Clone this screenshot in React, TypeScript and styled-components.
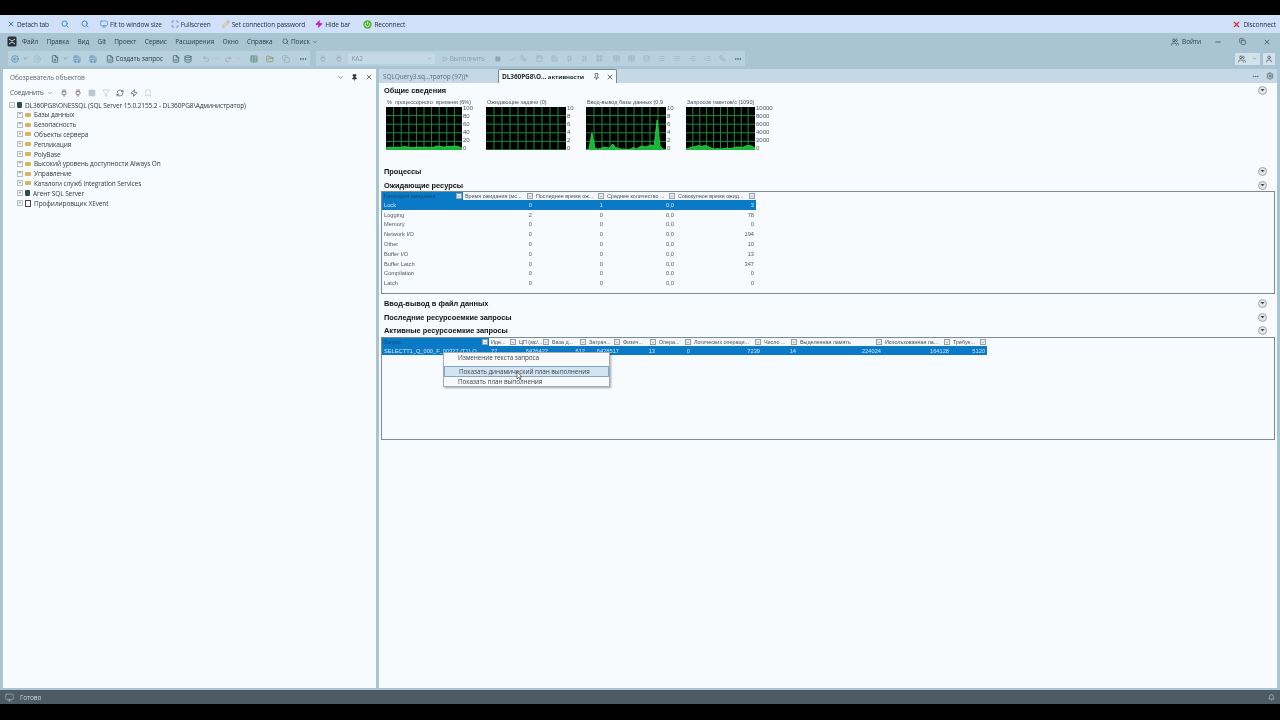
import React from "react";
import styled, { createGlobalStyle } from "styled-components";
import {
  Bell,
  Binary,
  Bookmark,
  Calendar,
  Check,
  ChevronDown,
  CircleArrowLeft,
  CircleArrowRight,
  Copy,
  Database,
  Ellipsis,
  FileCode,
  FilePlus,
  Filter,
  FolderOpen,
  IndentDecrease,
  IndentIncrease,
  LayoutGrid,
  List,
  Maximize,
  Minus,
  Monitor,
  Pencil,
  Pin,
  Play,
  Plug,
  Redo2,
  RefreshCw,
  Save,
  Search,
  Settings,
  Square,
  Table,
  Undo2,
  User,
  Users,
  Workflow,
  X,
  Zap,
} from "lucide-react";

const GlobalStyle = createGlobalStyle`
  html, body, #root { margin: 0; height: 100%; background: #000; }
  body { font-family: "Open Sans", "Noto Sans", sans-serif; overflow: hidden; }
`;

const CPU = [2, 3, 2.5, 3, 2.5, 3.5, 3, 2.5, 2.5, 3, 2.5, 3, 2.5, 2.5, 4, 3.5, 3, 3.5, 3.5, 4, 3.5, 2];
const TASKS = [0, 0];
const IO = [0, 1, 17, 2, 1, 1.5, 3, 2.5, 2, 6, 2.5, 1.5, 1, 1, 0.5, 1, 2.5, 1, 3, 4, 3, 4, 5, 4, 30, 4, 1, 0.5];
const PACKETS = [1, 2, 3, 3.5, 4.5, 3.5, 4.5, 3.5, 2, 1, 1.5, 1, 1.5, 2, 1.5, 2, 3, 3, 2.5, 4, 4.5, 4, 2];

const CHARTS = [
  { title: "%\u00a0 процессорного\u00a0 времени (6%)", chartWidth: 76, axis: [100, 80, 60, 40, 20, 0], points: CPU },
  { title: "Ожидающие задачи (0)", chartWidth: 80, axis: [10, 8, 6, 4, 2, 0], points: TASKS },
  { title: "Ввод-вывод базы данных (0,9", chartWidth: 80, axis: [10, 8, 6, 4, 2, 0], points: IO },
  { title: "Запросов пакетов/с (1090)", chartWidth: 69, axis: [10000, 8000, 6000, 4000, 2000, 0], points: PACKETS },
];

const WAIT_COLUMNS = [
  { title: "Категория ожидания", width: 81 },
  { title: "Время ожидания (мс...", width: 71 },
  { title: "Последнее время ож...", width: 71 },
  { title: "Среднее количество ...", width: 71 },
  { title: "Совокупное время ожид...", width: 80 },
];

const WAIT_ROWS = [
  ["Lock", "0", "1", "0,0", "3"],
  ["Logging", "2", "0", "0,0", "78"],
  ["Memory", "0", "0", "0,0", "0"],
  ["Network I/O", "0", "0", "0,0", "194"],
  ["Other", "0", "0", "0,0", "10"],
  ["Buffer I/O", "0", "0", "0,0", "13"],
  ["Buffer Latch", "0", "0", "0,0", "347"],
  ["Compilation", "0", "0", "0,0", "0"],
  ["Latch", "0", "0", "0,0", "0"],
];

const ACTIVE_COLUMNS = [
  { title: "Запрос", width: 107 },
  { title: "Иде...", width: 28 },
  { title: "ЦП (мс/...", width: 33 },
  { title: "База д...", width: 37 },
  { title: "Затрач...", width: 34 },
  { title: "Физич...", width: 36 },
  { title: "Опера...", width: 35 },
  { title: "Логических операци...", width: 70 },
  { title: "Число ...", width: 36 },
  { title: "Выделенная память", width: 85 },
  { title: "Использованная па...", width: 68 },
  { title: "Требуе...", width: 36 },
];

const ACTIVE_ROW = [
  "SELECTT1_Q_000_F_00327 (T1) O",
  "77",
  "6426422",
  "612",
  "6428517",
  "13",
  "0",
  "7239",
  "14",
  "224024",
  "164128",
  "5120",
];

const TREE = [
  "Базы данных",
  "Безопасность",
  "Объекты сервера",
  "Репликация",
  "PolyBase",
  "Высокий уровень доступности Always On",
  "Управление",
  "Каталоги служб Integration Services",
  "Агент SQL Server",
  "Профилировщик XEvent",
];

const MENU = ["Файл", "Правка", "Вид", "Git", "Проект", "Сервис", "Расширения", "Окно", "Справка"];

const QUERY_ICONS = [
  { Icon: Workflow, extra: 1 },
  { Icon: Calendar, extra: 0 },
  { Icon: Save, extra: 0 },
  { Icon: Binary, extra: 0 },
  { Icon: Binary, extra: 0 },
  { Icon: LayoutGrid, extra: 2 },
  { Icon: Table, extra: 0 },
  { Icon: Table, extra: 0 },
  { Icon: Database, extra: 0 },
  { Icon: List, extra: 0 },
  { Icon: List, extra: 1 },
  { Icon: IndentDecrease, extra: 0 },
  { Icon: IndentIncrease, extra: 0 },
  { Icon: Workflow, extra: 0 },
];

const TrendChart = ({ points, width }: { points: number[]; width: number }) => {
  const step = 100 / (points.length - 1);
  const line = points.map((p, i) => `${(i * step).toFixed(1)},${43 - p}`).join(" ");
  return (
    <ChartSvg $width={width} viewBox="0 0 100 43" preserveAspectRatio="none">
      <rect width="100" height="43" fill="#000" />
      {[8.6, 17.2, 25.8, 34.4].map((y) => (
        <line key={y} x1="0" x2="100" y1={y} y2={y} stroke="#1c8a38" strokeWidth="1" vectorEffect="non-scaling-stroke" />
      ))}
      {[10, 20, 30, 40, 50, 60, 70, 80, 90].map((x) => (
        <line key={x} x1={x} x2={x} y1="0" y2="43" stroke="#1c8a38" strokeWidth="1" vectorEffect="non-scaling-stroke" />
      ))}
      <polygon points={`0,43 ${line} 100,43`} fill="#18b536" />
      <polyline points={line} fill="none" stroke="#2be04f" strokeWidth="0.8" vectorEffect="non-scaling-stroke" />
    </ChartSvg>
  );
};

const CollapseButton = () => (
  <Collapse>
    <svg width="5" height="4" viewBox="0 0 5 4">
      <path d="M0.5 1h4L2.5 3.2z" fill="#444" />
    </svg>
  </Collapse>
);

const ReconnectIcon = () => (
  <svg width="9" height="9" viewBox="0 0 9 9">
    <circle cx="4.5" cy="4.5" r="4.2" fill="#4fb52f" />
    <path d="M3 2.9a2.2 2.2 0 1 0 3 0M4.5 1.8v2.4" fill="none" stroke="#eaf7e0" strokeWidth="0.9" />
  </svg>
);

const GridHeader = ({ columns }: { columns: { title: string; width: number }[] }) => (
  <HeaderRow>
    {columns.map((c, i) => (
      <HeaderCell key={c.title} $width={c.width} $selected={i === 0}>
        <HeaderText $selected={i === 0}>{c.title}</HeaderText>
        <FilterBox>
          <ChevronDown size={5} strokeWidth={2} />
        </FilterBox>
      </HeaderCell>
    ))}
  </HeaderRow>
);

const App = () => (
  <Page>
    <GlobalStyle />
    <RemoteBar>
      <RemoteItem $gap={12}><X size={8} color="#2f7fc4" strokeWidth={3} />Detach tab</RemoteItem>
      <RemoteItem $gap={12}><Search size={8} color="#3d8fc8" strokeWidth={3} /></RemoteItem>
      <RemoteItem $gap={11}><Search size={8} color="#3d8fc8" strokeWidth={3} /></RemoteItem>
      <RemoteItem $gap={9}><Monitor size={8} color="#4a86c0" />Fit to window size</RemoteItem>
      <RemoteItem $gap={11}><Maximize size={8} color="#5566c8" />Fullscreen</RemoteItem>
      <RemoteItem $gap={10}><Pencil size={8} color="#e09a30" />Set connection password</RemoteItem>
      <RemoteItem $gap={13}><Zap size={8} color="#c020c0" fill="#c020c0" />Hide bar</RemoteItem>
      <RemoteItem $gap={0}><ReconnectIcon />Reconnect</RemoteItem>
      <RemoteSpacer />
      <RemoteItem $gap={0}><X size={9} color="#d03030" strokeWidth={3} />Disconnect</RemoteItem>
    </RemoteBar>

    <Shell>
      <TitleBar>
        <Logo>
          <svg width="10" height="11" viewBox="0 0 10 11">
            <rect x="0.5" y="0.5" width="9" height="10" rx="1.5" fill="#26323a" />
            <path d="M2 3l3 2 3-2M2 8l3-2 3 2" fill="none" stroke="#c7dbe6" strokeWidth="1" />
          </svg>
        </Logo>
        {MENU.map((m) => (
          <MenuItem key={m}>{m}</MenuItem>
        ))}
        <SearchItem><Search size={7} /> Поиск <ChevronDown size={6} /></SearchItem>
        <TitleSpacer />
        <LoginItem><Users size={8} /> Войти</LoginItem>
        <WindowButtons>
          <Minus size={8} />
          <Copy size={7} />
          <X size={8} />
        </WindowButtons>
      </TitleBar>

      <ToolRow>
        <ToolGroup $width={302} $gap={4.3}>
          <CircleArrowLeft size={8} color="#3f7fb0" />
          <ChevronDown size={5} />
          <CircleArrowRight size={8} color="#98b4c2" />
          <ToolGap $w={2} />
          <FilePlus size={8} color="#34505e" />
          <ChevronDown size={5} />
          <Save size={8} color="#3f7fb0" />
          <ToolGap $w={0} />
          <Save size={8} color="#3f7fb0" />
          <ToolLabel><FileCode size={8} color="#34505e" />Создать запрос</ToolLabel>
          <FileCode size={8} color="#34505e" />
          <Database size={8} color="#34505e" />
          <ToolGap $w={1} />
          <Undo2 size={8} color="#8fa8b6" />
          <ChevronDown size={5} color="#8fa8b6" />
          <Redo2 size={8} color="#8fa8b6" />
          <ChevronDown size={5} color="#8fa8b6" />
          <ToolGap $w={1} />
          <Table size={8} color="#4d7f64" />
          <IconGap />
          <FolderOpen size={8} color="#8a8a40" />
          <IconGap />
          <Copy size={8} color="#8fa8b6" />
          <ToolGap $w={1} />
          <Ellipsis size={8} color="#34505e" />
        </ToolGroup>
        <ToolGroup $width={429} $gap={4}>
          <Plug size={8} color="#8fa8b6" />
          <ToolGap $w={0} />
          <Plug size={8} color="#8fa8b6" />
          <DbSelect>KA2<ChevronDown size={5} /></DbSelect>
          <RunLabel><Play size={6} />Выполнить</RunLabel>
          <Square size={6} fill="#8fa8b6" color="#8fa8b6" />
          <ToolGap $w={0} />
          <Check size={8} color="#8fa8b6" />
          {QUERY_ICONS.map(({ Icon, extra }, i) => (
            <DimIcon key={i} $extra={extra}><Icon size={7} color="#96b0be" /></DimIcon>
          ))}
          <Ellipsis size={8} color="#34505e" />
        </ToolGroup>
        <TitleSpacer />
        <AccountGroup>
          <AccountBox $width={14}><Users size={8} /></AccountBox>
          <AccountBox $width={11}><ChevronDown size={5} /></AccountBox>
          <AccountSecond $width={12}><User size={8} /></AccountSecond>
        </AccountGroup>
      </ToolRow>

      <Workspace>
        <ExplorerPanel>
          <PanelHead>
            <span>Обозреватель объектов</span>
            <PanelIcons>
              <ChevronDown size={7} />
              <Pin size={7} fill="#333" />
              <X size={8} />
            </PanelIcons>
          </PanelHead>
          <ExplorerTools>
            <ConnectLabel>Соединить <ChevronDown size={6} /></ConnectLabel>
            <Plug size={8} color="#34505e" />
            <Plug size={8} color="#6a3f5a" />
            <Square size={8} color="#b9c8d0" fill="#b9c8d0" />
            <Filter size={8} color="#b9c8d0" />
            <RefreshCw size={8} color="#34505e" />
            <Zap size={8} color="#34505e" />
            <Bookmark size={8} color="#b9c8d0" />
          </ExplorerTools>
          <TreeRoot>
            <Expander>−</Expander>
            <ServerIcon />
            DL360PG8\ONESSQL (SQL Server 15.0.2155.2 - DL360PG8\Администратор)
          </TreeRoot>
          {TREE.map((t, i) => (
            <TreeRow key={t}>
              <Expander>+</Expander>
              {i < 8 ? <FolderIcon /> : i === 8 ? <ServerIcon /> : <XEventIcon />}
              {t}
            </TreeRow>
          ))}
        </ExplorerPanel>

        <DocumentArea>
          <TabStrip>
            <InactiveTab>SQLQuery3.sq...тратор (97))*</InactiveTab>
            <ActiveTab>
              <span>DL360PG8\О... <small>активности</small></span>
              <TabIcons>
                <Pin size={7} />
                <X size={8} />
              </TabIcons>
            </ActiveTab>
            <TabTools>
              <Ellipsis size={7} />
              <Settings size={8} />
            </TabTools>
          </TabStrip>

          <DocBody>
            <SectionHead><SectionTitle>Общие сведения</SectionTitle><CollapseButton /></SectionHead>
            <ChartRow>
              {CHARTS.map((c) => (
                <ChartCard key={c.title}>
                  <ChartTitle>{c.title}</ChartTitle>
                  <ChartBody>
                    <TrendChart points={c.points} width={c.chartWidth} />
                    <Axis>
                      {c.axis.map((a) => (
                        <span key={a}>{a}</span>
                      ))}
                    </Axis>
                  </ChartBody>
                </ChartCard>
              ))}
            </ChartRow>

            <SectionHead><SectionTitle>Процессы</SectionTitle><CollapseButton /></SectionHead>
            <SectionHead><SectionTitle>Ожидающие ресурсы</SectionTitle><CollapseButton /></SectionHead>
            <GridBox $top={-1}>
              <GridHeader columns={WAIT_COLUMNS} />
              {WAIT_ROWS.map((r, ri) => (
                <DataRow key={r[0]} $selected={ri === 0} $height={9.8}>
                  {r.map((v, i) => (
                    <DataCell key={i} $width={WAIT_COLUMNS[i].width} $left={i === 0}>{v}</DataCell>
                  ))}
                </DataRow>
              ))}
            </GridBox>

            <SectionHead $top={2}><SectionTitle>Ввод-вывод в файл данных</SectionTitle><CollapseButton /></SectionHead>
            <SectionHead><SectionTitle>Последние ресурсоемкие запросы</SectionTitle><CollapseButton /></SectionHead>
            <SectionHead $top={-1}><SectionTitle>Активные ресурсоемкие запросы</SectionTitle><CollapseButton /></SectionHead>
            <GridBox $top={0}>
              <GridHeader columns={ACTIVE_COLUMNS} />
              <DataRow $selected $height={9}>
                {ACTIVE_ROW.map((v, i) => (
                  <DataCell key={i} $width={ACTIVE_COLUMNS[i].width} $left={i < 2}>{v}</DataCell>
                ))}
              </DataRow>
              <ContextMenu>
                <ContextItem>Изменение текста запроса</ContextItem>
                <ActiveContextItem>Показать динамический план выполнения</ActiveContextItem>
                <ContextItem>Показать план выполнения</ContextItem>
                <Cursor viewBox="0 0 8 12" width="7" height="10">
                  <path d="M1 1v8.5l2-2 1.4 3 1.3-.6-1.4-2.9H7z" fill="#fff" stroke="#222" strokeWidth="0.7" />
                </Cursor>
              </ContextMenu>
            </GridBox>
          </DocBody>
        </DocumentArea>
      </Workspace>
    </Shell>

    <StatusBar>
      <StatusLeft><Monitor size={9} strokeWidth={1.2} /> Готово</StatusLeft>
      <Bell size={7} />
    </StatusBar>
  </Page>
);

const Page = styled.div`
  display: flex;
  flex-direction: column;
  width: 1280px;
  height: 720px;
  padding: 15px 0 16px;
  box-sizing: border-box;
  background: #000;
  color: #222;
  letter-spacing: -0.1px;
  filter: blur(0.3px);
`;

const RemoteBar = styled.div`
  display: flex;
  align-items: center;
  height: 18px;
  flex: none;
  padding: 0 4px 0 7px;
  background: #cfe0f8;
  font-size: 6.5px;
  color: #1c2a38;
`;

const RemoteItem = styled.div<{ $gap: number }>`
  display: flex;
  align-items: center;
  gap: 2px;
  margin-right: ${(p) => p.$gap}px;
  white-space: nowrap;
`;

const RemoteSpacer = styled.div`
  flex: 1;
`;

const Shell = styled.div`
  display: flex;
  flex-direction: column;
  flex: 1;
  min-height: 0;
  background: #a9c5d3;
`;

const TitleBar = styled.div`
  display: flex;
  align-items: center;
  height: 17px;
  flex: none;
  padding: 0 9px 0 7px;
  font-size: 6.5px;
  color: #2c3d47;
`;

const Logo = styled.div`
  display: flex;
  margin-right: 5px;
`;

const MenuItem = styled.div`
  display: flex;
  align-items: center;
  gap: 2px;
  margin-right: 8.35px;
  white-space: nowrap;
`;

const SearchItem = styled(MenuItem)`
  margin-left: 1px;
`;

const TitleSpacer = styled.div`
  flex: 1;
`;

const LoginItem = styled.div`
  display: flex;
  align-items: center;
  gap: 3px;
  margin-right: 13px;
`;

const WindowButtons = styled.div`
  display: flex;
  align-items: center;
  gap: 17px;
`;

const ToolRow = styled.div`
  display: flex;
  align-items: center;
  gap: 6px;
  height: 17px;
  flex: none;
  padding: 0 5px 0 8px;
`;

const ToolGroup = styled.div<{ $width: number; $gap: number }>`
  display: flex;
  align-items: center;
  gap: ${(p) => p.$gap}px;
  width: ${(p) => p.$width}px;
  height: 15px;
  padding: 0 3px;
  box-sizing: border-box;
  background: #b9d1de;
  font-size: 6.5px;
  color: #2c3d47;
`;

const ToolGap = styled.span<{ $w: number }>`
  width: ${(p) => p.$w}px;
  flex: none;
`;

const IconGap = styled.span`
  width: 0;
  margin-left: -1px;
`;

const ToolLabel = styled.span`
  display: flex;
  align-items: center;
  gap: 1px;
  margin: 0 5px 0 5px;
  white-space: nowrap;
`;

const DbSelect = styled.div`
  display: flex;
  align-items: center;
  justify-content: space-between;
  width: 89px;
  height: 11px;
  margin-left: 2px;
  padding: 0 3px;
  box-sizing: border-box;
  background: #c5d9e4;
  color: #7f97a5;
`;

const RunLabel = styled.span`
  display: flex;
  align-items: center;
  gap: 2px;
  margin: 0 6px 0 3px;
  color: #86a0ae;
`;

const DimIcon = styled.span<{ $extra: number }>`
  display: flex;
  margin-right: ${(p) => 4 + p.$extra}px;
`;

const AccountGroup = styled.div`
  display: flex;
`;

const AccountBox = styled.div<{ $width: number }>`
  display: flex;
  align-items: center;
  justify-content: center;
  width: ${(p) => p.$width}px;
  height: 12px;
  box-sizing: border-box;
  background: #d2e2ea;
  color: #36484f;
`;

const AccountSecond = styled(AccountBox)`
  margin-left: 3px;
`;

const Workspace = styled.div`
  display: flex;
  gap: 3px;
  flex: 1;
  min-height: 0;
  padding: 2px 3px 2px 3px;
`;

const ExplorerPanel = styled.div`
  display: flex;
  flex-direction: column;
  width: 373px;
  flex: none;
  background: #f8fbfd;
  font-size: 6.5px;
  color: #2c3a42;
`;

const PanelHead = styled.div`
  display: flex;
  align-items: center;
  justify-content: space-between;
  height: 16px;
  padding: 0 3px 0 7px;
  color: #5c6b73;
`;

const PanelIcons = styled.div`
  display: flex;
  align-items: center;
  gap: 7px;
  color: #333;
`;

const ExplorerTools = styled.div`
  display: flex;
  align-items: center;
  gap: 6px;
  height: 15px;
  padding-left: 7px;
`;

const ConnectLabel = styled.span`
  display: flex;
  align-items: center;
  gap: 3px;
  margin-right: 1px;
  color: #45545c;
`;

const TreeRoot = styled.div`
  display: flex;
  align-items: center;
  gap: 2px;
  height: 10px;
  padding-left: 6px;
  white-space: nowrap;
`;

const TreeRow = styled.div`
  display: flex;
  align-items: center;
  gap: 2px;
  height: 9.8px;
  padding-left: 14px;
  white-space: nowrap;
`;

const Expander = styled.span`
  display: flex;
  align-items: center;
  justify-content: center;
  width: 4px;
  height: 4px;
  border: 0.5px solid #b5bfc4;
  font-size: 5px;
  line-height: 1;
  color: #777;
`;

const FolderIcon = styled.span`
  width: 6px;
  height: 4px;
  margin-right: 1px;
  border-radius: 1px;
  background: #d9b45f;
`;

const ServerIcon = styled.span`
  width: 5px;
  height: 6px;
  margin-right: 1px;
  border-radius: 1px;
  background: #2f4f45;
`;

const XEventIcon = styled.span`
  width: 4px;
  height: 5px;
  margin-right: 1px;
  border: 0.7px solid #444;
`;

const DocumentArea = styled.div`
  display: flex;
  flex-direction: column;
  flex: 1;
  min-width: 0;
`;

const TabStrip = styled.div`
  display: flex;
  align-items: flex-end;
  height: 14px;
  flex: none;
  background: #c4d9e5;
`;

const InactiveTab = styled.div`
  display: flex;
  align-items: center;
  width: 119px;
  height: 14px;
  padding-left: 4px;
  box-sizing: border-box;
  font-size: 6.5px;
  color: #53707f;
  white-space: nowrap;
`;

const ActiveTab = styled.div`
  display: flex;
  align-items: center;
  justify-content: space-between;
  width: 119px;
  height: 14px;
  padding: 0 2px 0 3px;
  box-sizing: border-box;
  border: 1px solid #6f8d9c;
  border-bottom: none;
  border-radius: 2px 2px 0 0;
  background: #f8fbfd;
  font-size: 6.5px;
  font-weight: 700;
  color: #1c2a33;
  white-space: nowrap;

  small {
    font-size: 6px;
  }
`;

const TabIcons = styled.span`
  display: flex;
  align-items: center;
  gap: 6px;
`;

const TabTools = styled.div`
  display: flex;
  align-items: center;
  gap: 7px;
  height: 14px;
  margin-left: auto;
  padding-right: 3px;
  color: #36484f;
`;

const DocBody = styled.div`
  display: flex;
  flex-direction: column;
  flex: 1;
  min-height: 0;
  padding-left: 1px;
  background: #f7fbfd;
`;

const SectionHead = styled.div<{ $top?: number }>`
  display: flex;
  align-items: center;
  justify-content: space-between;
  height: 14px;
  flex: none;
  margin-top: ${(p) => p.$top ?? 0}px;
  padding: 0 10px 0 4px;
`;

const SectionTitle = styled.div`
  font-family: "Liberation Sans", sans-serif;
  font-size: 7.4px;
  font-weight: 700;
  letter-spacing: 0;
  color: #111;
`;

const Collapse = styled.div`
  display: flex;
  align-items: center;
  justify-content: center;
  width: 9px;
  height: 9px;
  box-sizing: border-box;
  border: 1px solid #a7a7a7;
  border-radius: 50%;
  background: #e2e4e5;
`;

const ChartRow = styled.div`
  display: flex;
  height: 67px;
  flex: none;
  padding-left: 6px;
`;

const ChartCard = styled.div`
  display: flex;
  flex-direction: column;
  width: 100px;
  font-family: "Liberation Sans", sans-serif;
  letter-spacing: 0;
  color: #4a5258;
`;

const ChartTitle = styled.div`
  height: 10px;
  line-height: 10px;
  font-size: 5.5px;
  white-space: nowrap;
  padding-left: 1px;
`;

const ChartBody = styled.div`
  display: flex;
  height: 43px;
`;

const ChartSvg = styled.svg<{ $width: number }>`
  width: ${(p) => p.$width}px;
  height: 43px;
  flex: none;
`;

const Axis = styled.div`
  display: flex;
  flex-direction: column;
  justify-content: space-between;
  height: 45px;
  margin-top: -1px;
  padding-left: 1px;
  font-size: 6px;
  line-height: 5px;
`;

const GridBox = styled.div<{ $top: number }>`
  position: relative;
  display: flex;
  flex-direction: column;
  height: 103px;
  flex: none;
  box-sizing: border-box;
  margin: ${(p) => p.$top}px 2px 0 1px;
  border: 1px solid #7d8b92;
  background: #f8fbfd;
`;

const HeaderRow = styled.div`
  display: flex;
  height: 8px;
  flex: none;
`;

const HeaderCell = styled.div<{ $width: number; $selected: boolean }>`
  display: flex;
  align-items: center;
  justify-content: space-between;
  width: ${(p) => p.$width}px;
  flex: none;
  padding: 0 1px 0 2px;
  box-sizing: border-box;
  overflow: hidden;
  background: ${(p) => (p.$selected ? "#0a79c6" : "#f4f7f9")};
`;

const HeaderText = styled.span<{ $selected: boolean }>`
  font-family: "Liberation Sans", sans-serif;
  font-size: 5.4px;
  letter-spacing: 0;
  color: ${(p) => (p.$selected ? "#1d4c74" : "#4a5258")};
  white-space: nowrap;
  overflow: hidden;
`;

const FilterBox = styled.span`
  display: flex;
  align-items: center;
  justify-content: center;
  width: 6px;
  height: 6px;
  flex: none;
  box-sizing: border-box;
  border: 0.5px solid #98a4ab;
  background: #e8edf0;
  color: #555;
`;

const DataRow = styled.div<{ $selected?: boolean; $height: number }>`
  display: flex;
  align-items: center;
  align-self: flex-start;
  height: ${(p) => p.$height}px;
  flex: none;
  background: ${(p) => (p.$selected ? "#0a79c6" : "transparent")};
  color: ${(p) => (p.$selected ? "#cfe6f7" : "#4f5960")};
`;

const DataCell = styled.div<{ $width: number; $left: boolean }>`
  width: ${(p) => p.$width}px;
  flex: none;
  padding: 0 2px;
  box-sizing: border-box;
  font-family: "Liberation Sans", sans-serif;
  font-size: 5.7px;
  letter-spacing: 0;
  text-align: ${(p) => (p.$left ? "left" : "right")};
  white-space: nowrap;
  overflow: hidden;
`;

const ContextMenu = styled.div`
  position: absolute;
  left: 61px;
  top: 14px;
  display: flex;
  flex-direction: column;
  width: 167px;
  height: 35px;
  box-sizing: border-box;
  border: 1px solid #9fb0ba;
  background: #f7f9fb;
  box-shadow: 1px 1px 2px rgba(0, 0, 0, 0.35);
`;

const ContextItem = styled.div`
  height: 10px;
  line-height: 10px;
  padding-left: 14px;
  box-sizing: border-box;
  font-size: 6.4px;
  color: #3a4850;
  white-space: nowrap;
`;

const ActiveContextItem = styled(ContextItem)`
  height: 11px;
  margin-top: 3px;
  border: 0.5px solid #7fa6c8;
  background: #d5e3f0;
`;

const Cursor = styled.svg`
  position: absolute;
  left: 72px;
  top: 18px;
`;

const StatusBar = styled.div`
  display: flex;
  align-items: center;
  justify-content: space-between;
  height: 14px;
  flex: none;
  padding: 0 5px;
  background: #4c5c62;
  color: #cfd8dc;
  font-size: 6.5px;
`;

const StatusLeft = styled.div`
  display: flex;
  align-items: center;
  gap: 6px;
`;

export default App;
